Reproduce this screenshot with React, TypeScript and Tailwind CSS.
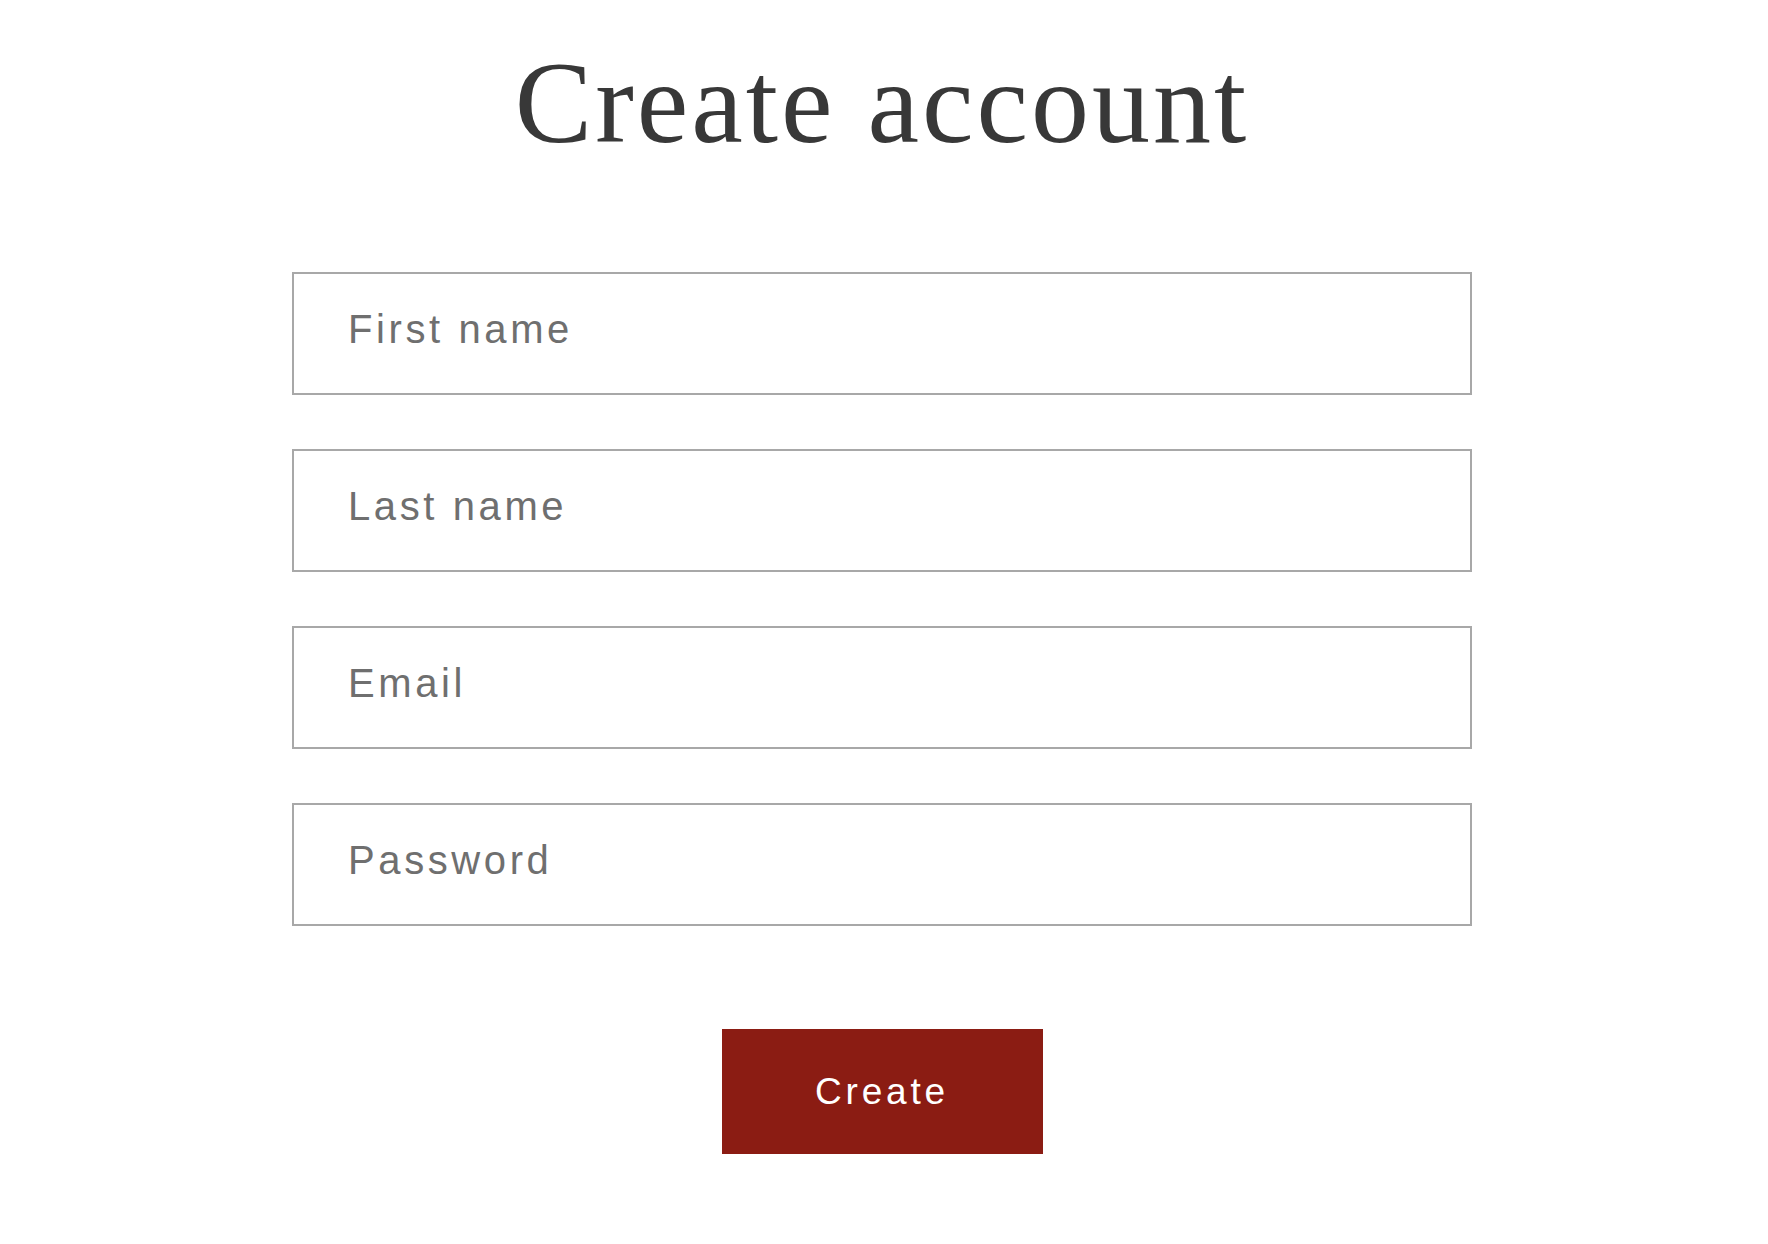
const FIELDS = [
  { name: 'first_name', label: 'First name', type: 'text' },
  { name: 'last_name', label: 'Last name', type: 'text' },
  { name: 'email', label: 'Email', type: 'email' },
  { name: 'password', label: 'Password', type: 'password' },
]

export default function App() {
  return (
    <div className="min-h-screen bg-white pt-[45px] pr-[4px]">
      <div className="w-[1180px] mx-auto flex flex-col items-center">
        <h1 className="font-['Liberation_Serif',serif] text-[116px] leading-none tracking-[3px] text-[#383838] font-normal">
          Create account
        </h1>

        <form className="w-full mt-[111px] flex flex-col gap-[54px]" onSubmit={(e) => e.preventDefault()}>
          {FIELDS.map((field) => (
            <input
              key={field.name}
              name={field.name}
              type={field.type}
              placeholder={field.label}
              className="w-full h-[123px] border-2 border-[#a8a8a8] bg-white pl-[54px] pr-[52px] pb-[8px] font-['Liberation_Sans',Arial,sans-serif] text-[40px] tracking-[3.6px] text-[#333] placeholder:text-[#6f6f6f] outline-none"
            />
          ))}

          {/* Submit */}
          <div className="flex justify-center mt-[49px]">
            <button
              type="submit"
              className="w-[321px] h-[125px] bg-[#8b1c13] text-white font-['Liberation_Sans',Arial,sans-serif] text-[37px] tracking-[3.8px]"
            >
              Create
            </button>
          </div>
        </form>
      </div>
    </div>
  )
}
